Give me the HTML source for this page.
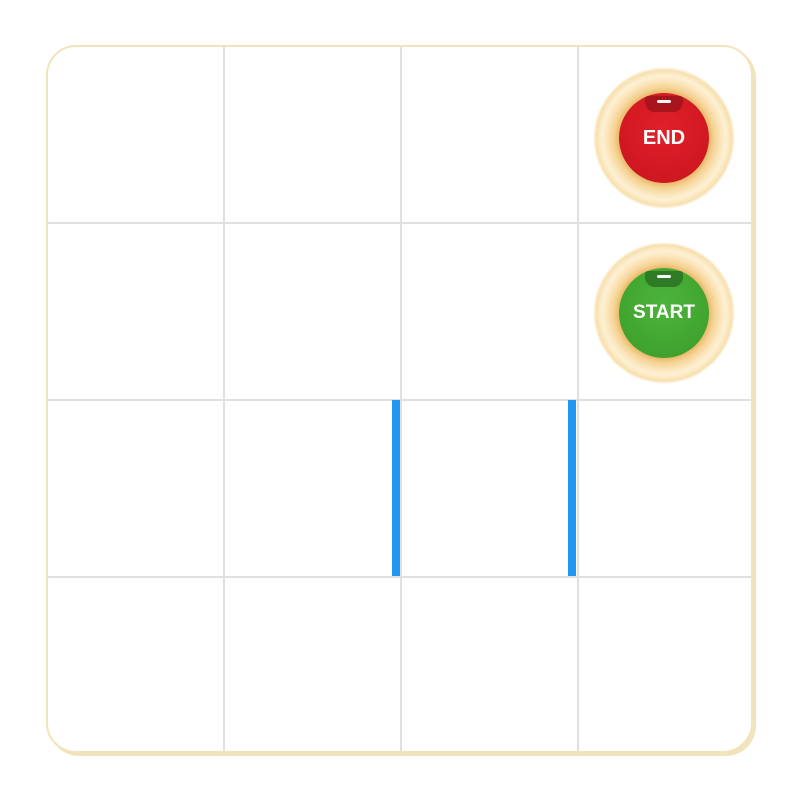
<!DOCTYPE html><html><head><style>
body{margin:0;width:800px;height:800px;background:#fff;position:relative;overflow:hidden;font-family:"Liberation Sans",sans-serif}
.board{position:absolute;left:46px;top:45px;width:707px;height:708px;border:2px solid #f1e3bc;border-radius:30px;box-shadow:3px 3px 0 #f1e3bc;box-sizing:border-box;background:#fff;overflow:hidden}
.v,.h{position:absolute;background:#e0e0e0}
.v{width:2px;top:0;bottom:0}.h{height:2px;left:0;right:0}
.blue{position:absolute;background:#2196f3;width:8px;top:400px;height:176px}
.btn{position:absolute;width:142px;height:142px;border-radius:50%;background:radial-gradient(circle,#e0a850 0,#eab868 45px,#f5d294 50px,#fbe6bc 57px,#fdf0d4 62px,#f8e0ae 68px,rgba(250,230,184,0) 71px)}
.in{position:absolute;left:26px;top:26px;width:90px;height:90px;border-radius:50%;display:flex;align-items:center;justify-content:center;color:#fff;font-weight:bold;font-size:20px;overflow:hidden}
.tab{position:absolute;left:26px;top:3px;width:38px;height:16px;border-radius:3px 3px 10px 10px}
.tab:after{content:"";position:absolute;left:12px;top:4px;width:14px;height:3px;background:#fff;border-radius:2px}
</style></head><body>
<div class="board">
<div class="v" style="left:175px"></div><div class="v" style="left:352px"></div><div class="v" style="left:529px"></div>
<div class="h" style="top:175px"></div><div class="h" style="top:352px"></div><div class="h" style="top:529px"></div>
</div>
<div class="blue" style="left:392px"></div>
<div class="blue" style="left:568px"></div>
<div class="btn" style="left:593px;top:67px"><div class="in" style="background:radial-gradient(circle at 50% 40%,#e0202a,#c8141e)"><div class="tab" style="background:#a8141c"></div>END</div></div>
<div class="btn" style="left:593px;top:242px"><div class="in" style="background:radial-gradient(circle at 50% 40%,#4cb43a,#3a9c2a);font-size:19px"><div class="tab" style="background:#2f7a24"></div>START</div></div>
</body></html>
